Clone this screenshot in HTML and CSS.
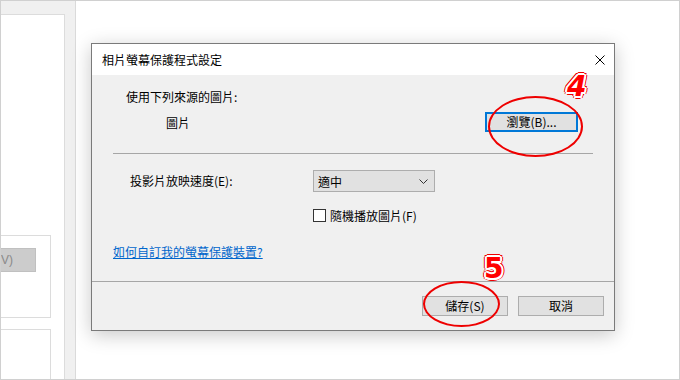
FILE: index.html
```html
<!DOCTYPE html>
<html lang="zh-Hant">
<head>
    <meta charset="UTF-8">
    <meta name="viewport" content="width=device-width, initial-scale=1.0">
    <title>相片螢幕保護程式設定</title>
    <link rel="stylesheet" href="styles.css">
</head>
<body>
    <div class="screen">
        <aside class="side">
            <div class="side-card">
                <div class="side-box">
                    <span class="side-btn">V)</span>
                </div>
                <div class="side-box side-box-low"></div>
            </div>
        </aside>

        <main class="desk">
            <div class="dialog">
                <div class="titlebar">
                    <span class="title">相片螢幕保護程式設定</span>
                    <svg class="close" width="10" height="10" viewBox="0 0 10 10">
                        <path d="M0.5 0.5 L9.5 9.5 M9.5 0.5 L0.5 9.5" stroke="#000" stroke-width="1" fill="none"/>
                    </svg>
                </div>

                <div class="dlg-body">
                    <p class="src-label">使用下列來源的圖片:</p>
                    <div class="src-row">
                        <span class="src-name">圖片</span>
                        <button class="btn btn-focus" type="button">瀏覽(B)...</button>
                    </div>
                    <hr class="sep">
                    <div class="speed-row">
                        <span class="speed-label">投影片放映速度(E):</span>
                        <div class="select">
                            <span>適中</span>
                            <svg width="9" height="5" viewBox="0 0 9 5">
                                <path d="M0.5 0.5 L4.5 4.5 L8.5 0.5" stroke="#333" stroke-width="1" fill="none"/>
                            </svg>
                        </div>
                    </div>
                    <label class="check-row">
                        <span class="check"></span>
                        <span>隨機播放圖片(F)</span>
                    </label>
                    <a class="help-link" href="#">如何自訂我的螢幕保護裝置?</a>
                </div>

                <div class="dlg-foot">
                    <button class="btn" type="button">儲存(S)</button>
                    <button class="btn" type="button">取消</button>
                </div>

                <span class="ring ring-4"></span>
                <span class="mark mark-4">4</span>
                <span class="ring ring-5"></span>
                <span class="mark mark-5">5</span>
            </div>
        </main>
    </div>
</body>
</html>
```

FILE: styles.css
```css
* {
    box-sizing: border-box;
}
body {
    margin: 0;
    font-family: "Noto Sans CJK TC", "Liberation Sans", sans-serif;
    font-size: 12px;
    color: #000000;
    background-color: #ffffff;
}
.screen {
    width: 680px;
    height: 380px;
    display: flex;
    border: 1px solid #d0d0d0;
    overflow: hidden;
}

/* left settings panel, cut off */
.side {
    width: 75px;
    flex: none;
    padding-top: 13px;
    background-color: #f0f0f0;
    border-right: 1px solid #dadada;
}
.side-card {
    width: 64px;
    height: 100%;
    padding-top: 220px;
    background-color: #ffffff;
    border-top: 1px solid #dcdcdc;
    border-right: 1px solid #dcdcdc;
}
.side-box {
    width: 50px;
    height: 83px;
    padding-top: 12px;
    border: 1px solid #dcdcdc;
    border-left: none;
}
.side-box-low {
    height: 60px;
    margin-top: 11px;
}
.side-btn {
    display: block;
    width: 35px;
    height: 24px;
    line-height: 22px;
    font-family: "Liberation Sans", sans-serif;
    font-size: 12px;
    color: #8a8a8a;
    background-color: #cccccc;
    border: 1px solid #c0c0c0;
    border-left: none;
}

/* desktop area */
.desk {
    flex: 1;
    padding: 42px 0 0 15px;
    background-color: #ffffff;
}
.dialog {
    position: relative;
    width: 524px;
    height: 288px;
    border: 1px solid #7a7a7a;
    background-color: #f0f0f0;
    box-shadow: 0 4px 18px rgba(0, 0, 0, 0.22);
}
.titlebar {
    height: 31px;
    display: flex;
    align-items: center;
    justify-content: space-between;
    padding: 0 9px 0 10px;
    background-color: #ffffff;
}
.title {
    line-height: 16px;
}
.dlg-body {
    height: 206px;
    padding: 14px 21px 0;
}
.src-label {
    margin: 0;
    padding-left: 13px;
    line-height: 16px;
}
.src-row {
    margin-top: 7px;
    height: 20px;
    display: flex;
    align-items: center;
    justify-content: space-between;
    padding: 0 15px 0 53px;
}
.btn {
    width: 86px;
    height: 20px;
    padding: 0;
    font-family: inherit;
    font-size: 12px;
    line-height: 16px;
    color: #000000;
    background-color: #e1e1e1;
    border: 1px solid #adadad;
}
.btn-focus {
    width: 93px;
    border: 2px solid #0078d7;
}
.sep {
    margin: 21px 0 0;
    border: none;
    border-top: 1px solid #a6a6a6;
}
.speed-row {
    margin-top: 16px;
    display: grid;
    grid-template-columns: 200px 122px;
    align-items: center;
}
.speed-label {
    padding-left: 17px;
    line-height: 16px;
}
.select {
    height: 22px;
    display: flex;
    align-items: center;
    justify-content: space-between;
    padding: 0 6px 0 4px;
    background-color: #e1e1e1;
    border: 1px solid #adadad;
}
.check-row {
    margin-top: 17px;
    height: 13px;
    display: flex;
    align-items: center;
    gap: 4px;
    padding-left: 200px;
    line-height: 16px;
}
.check {
    width: 13px;
    height: 13px;
    background-color: #ffffff;
    border: 1px solid #333333;
}
.help-link {
    display: inline-block;
    margin-top: 22px;
    line-height: 16px;
    color: #0066cc;
    text-decoration: underline;
}
.dlg-foot {
    height: 49px;
    display: flex;
    justify-content: flex-end;
    gap: 10px;
    padding: 14px 10px 0 0;
    border-top: 1px solid #a6a6a6;
}

/* red annotations */
.ring {
    position: absolute;
    border: 2px solid #ee0000;
    border-radius: 50%;
}
.ring-4 {
    left: 396px;
    top: 52px;
    width: 95px;
    height: 61px;
}
.ring-5 {
    left: 331px;
    top: 237px;
    width: 77px;
    height: 46px;
}
.mark {
    position: absolute;
    font-family: "DejaVu Sans", sans-serif;
    font-weight: bold;
    font-size: 28px;
    line-height: 1;
    color: #ff0000;
    text-shadow:
        2px 0 0 #fff, -2px 0 0 #fff, 0 2px 0 #fff, 0 -2px 0 #fff,
        1.5px 1.5px 0 #fff, -1.5px -1.5px 0 #fff, 1.5px -1.5px 0 #fff, -1.5px 1.5px 0 #fff,
        3px 0 0 #e00, -3px 0 0 #e00, 0 3px 0 #e00, 0 -3px 0 #e00,
        2.2px 2.2px 0 #e00, -2.2px -2.2px 0 #e00, 2.2px -2.2px 0 #e00, -2.2px 2.2px 0 #e00;
}
.mark-4 {
    left: 475px;
    top: 29px;
    font-style: italic;
}
.mark-5 {
    left: 392px;
    top: 211px;
}
```
